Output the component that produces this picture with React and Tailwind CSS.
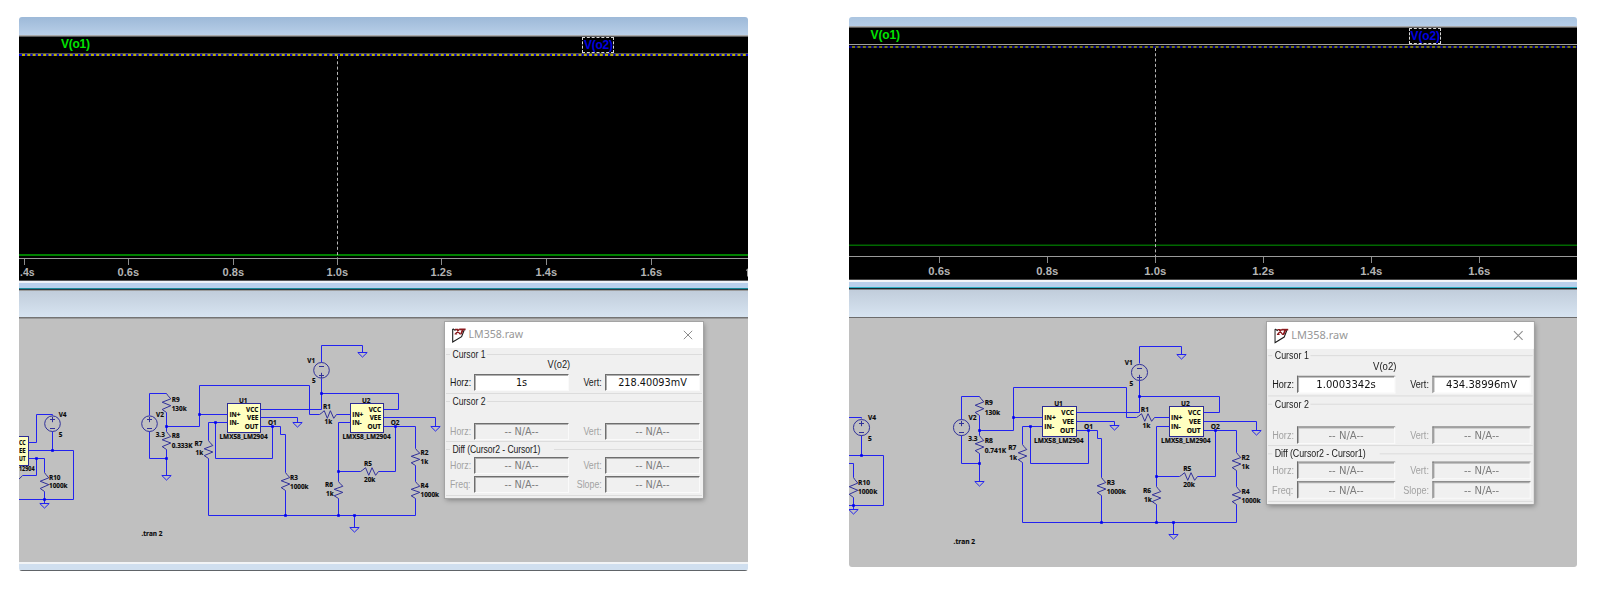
import React from 'react';

// Schematic is described once in sheet units; each view maps it with its own scale and offset.
const WIRES = [
  [[52.3, 415], [52.3, 414.3], [36.3, 414.3], [36.3, 442], [28.5, 442]],
  [[28.5, 450.7], [73.3, 450.7], [73.3, 499.7], [10, 499.7]],
  [[52.3, 431.7], [52.3, 450.7]],
  [[28.5, 458.7], [44.3, 458.7], [44.3, 472]],
  [[36.3, 458.7], [36.3, 475.5], [22.5, 475.5]],
  [[44.3, 491], [44.3, 503]],
  [[149.7, 415.7], [149.7, 393.3], [166.7, 393.3]],
  [[166.7, 412], [166.7, 431]],
  [[149.7, 431.7], [149.7, 458.7], [166.7, 458.7]],
  [[166.7, 449], [166.7, 475.5]],
  [[166.7, 426.3], [199.3, 426.3], [199.3, 385.3], [309.3, 385.3], [309.3, 414.3], [319, 414.3]],
  [[199.3, 414.3], [227.7, 414.3]],
  [[227.7, 422.3], [208, 422.3], [208, 440]],
  [[208, 458], [208, 515.7], [415.7, 515.7], [415.7, 498]],
  [[215.7, 422.3], [215.7, 458.7], [272.7, 458.7], [272.7, 426.3]],
  [[260.7, 409.3], [321.3, 409.3]],
  [[260.7, 417.5], [297.3, 417.5], [297.3, 422]],
  [[260.7, 426.3], [280.7, 426.3], [280.7, 434.3], [285, 434.3], [285, 472]],
  [[285, 490], [285, 515.7]],
  [[321.3, 362], [321.3, 345], [362.8, 345], [362.8, 352.5]],
  [[321.3, 378], [321.3, 409.3]],
  [[321.3, 393.3], [398.8, 393.3], [398.8, 409.3], [383.5, 409.3]],
  [[336, 414.3], [350.3, 414.3]],
  [[383.5, 417.5], [435.3, 417.5], [435.3, 426.5]],
  [[383.5, 426.3], [415.7, 426.3], [415.7, 448]],
  [[395.3, 426.3], [395.3, 471], [378, 471]],
  [[360, 471], [338.3, 471]],
  [[350.3, 422.3], [338.3, 422.3], [338.3, 481]],
  [[338.3, 498], [338.3, 515.7]],
  [[415.7, 465], [415.7, 481]],
  [[354.3, 515.7], [354.3, 527]],
];
const DOTS = [
  [52.3, 450.7], [36.3, 458.7], [44.3, 499.7], [166.7, 426.3], [166.7, 458.7], [199.3, 414.3],
  [215.7, 422.3], [272.7, 426.3], [285, 515.7], [321.3, 393.3], [395.3, 426.3], [338.3, 471],
  [338.3, 515.7], [354.3, 515.7],
];
const GROUNDS = [[44.3, 503], [166.7, 475.5], [297.3, 422], [362.8, 352.5], [435.3, 426.5], [354.3, 527]];
const V_RES = [
  [44.3, 472, 491], [166.7, 393.3, 412], [166.7, 431, 449], [208, 440, 458], [285, 472, 490],
  [338.3, 481, 498], [415.7, 448, 465], [415.7, 481, 498],
];
const H_RES = [[319, 336, 414.3], [360, 378, 471]];
const SOURCES = [[52.3, 423.7, false], [149.7, 423.7, false], [321.3, 370.3, true]];
const CHIPS = [[-4, 28.5, 436], [227.7, 260.5, 403.3], [350.3, 383.3, 403.3]];
const labels = (r8) => [
  ['V4', 58.7, 416.7], ['5', 58.7, 436.7], ['R10', 49, 479.7], ['1000k', 49, 488.2],
  ['R9', 171.7, 401.7], ['130k', 171.7, 411.3], ['V2', 156, 416.7], ['3.3', 155.7, 436.8],
  ['R8', 171.7, 438.3], [r8, 171.7, 448], ['R7', 194.5, 445.7], ['1k', 195.5, 455],
  ['.tran 2', 141.5, 536.3], ['V1', 307.3, 363.2], ['5', 312, 383.3],
  ['U1', 239, 402.5], ['U2', 362, 402.5], ['R1', 323, 409], ['1k', 324.5, 423.7],
  ['IN+', 229.5, 416.7], ['IN-', 229.5, 424.8], ['IN+', 352.3, 416.7], ['IN-', 352.3, 424.8],
  ['O1', 268, 425.2], ['O2', 390.7, 425.2],
  ['LMX58_LM2904', 219.5, 438.6], ['LMX58_LM2904', 342.5, 438.6],
  ['R3', 290, 479.7], ['1000k', 290, 488.5], ['R5', 364, 465.7], ['20k', 364, 481.6],
  ['R6', 325, 486.8], ['1k', 326, 496.3], ['R2', 420.5, 455.2], ['1k', 420.5, 464],
  ['R4', 420.5, 487.6], ['1000k', 420.5, 497.2],
];

function Schematic({ k, dx, dy, left, top, height, r8, edgeChip }) {
  const fx = (x) => x * k + dx;
  const fy = (y) => y * k + dy;
  const sx = (x) => Math.floor(fx(x)) + 0.5;
  const sy = (y) => Math.floor(fy(y)) + 0.5;
  const line = (pts) => pts.map(([x, y]) => `${sx(x)},${sy(y)}`).join(' ');
  const zig = [[0, 0], [0.1, 0.3], [0.28, 1], [0.46, -1], [0.64, 1], [0.84, -1], [1, 0]];
  return (
    <svg
      className="block w-full flex-none"
      style={{ height }}
      viewBox={`${left} ${top} 729 ${height}`}
      preserveAspectRatio="xMinYMin slice"
      fill="none"
    >
      {CHIPS.map(([a, b, y]) => (
        <rect key={a} x={sx(a)} y={sy(y)} width={sx(b) - sx(a)} height={Math.round(28.7 * k)} fill="#ffffc0" stroke="#2b2b96" />
      ))}
      <g stroke="#2222f0">
        {WIRES.map((w, i) => <polyline key={i} points={line(w)} />)}
        <path d={`M${fx(22.5)} ${fy(475.7)}L${fx(18)} ${fy(480)}`} stroke="#30309a" />
        {GROUNDS.map(([x, y], i) => (
          <path key={i} d={`M${sx(x) - 4.7} ${sy(y)}h9.4l-4.7 4.6z`} />
        ))}
      </g>
      {DOTS.map(([x, y], i) => <rect key={i} x={sx(x) - 1.3} y={sy(y) - 1.3} width="2.6" height="2.6" fill="#0000f0" />)}
      <g stroke="#30309a">
        {V_RES.map(([x, a, b], i) => (
          <polyline key={i} points={zig.map(([t, u]) => `${sx(x) + u * 4.3},${sy(a) + t * (sy(b) - sy(a))}`).join(' ')} />
        ))}
        {H_RES.map(([a, b, y], i) => (
          <polyline key={i} points={zig.map(([t, u]) => `${sx(a) + t * (sx(b) - sx(a))},${sy(y) - u * 3.8}`).join(' ')} />
        ))}
        {SOURCES.map(([x, y, flip], i) => {
          const p = flip ? 5.3 : -4.3;
          const m = flip ? -4 : 5;
          return (
            <g key={i}>
              <circle cx={sx(x)} cy={fy(y)} r={7.8 * k} />
              <path d={`M${sx(x) - 2.5} ${sy(y + p)}h5M${sx(x)} ${sy(y + p) - 2.7}v5.4M${sx(x) - 2.5} ${sy(y + m)}h5`} />
            </g>
          );
        })}
      </g>
      <g fill="#0a0a0a" stroke="#0a0a0a" strokeWidth="0.15" fontFamily="'Open Sans', 'Noto Sans', sans-serif" fontWeight="700" fontSize={6.4 * k}>
        {labels(r8).map(([t, x, y], i) => <text key={i} x={fx(x)} y={fy(y)}>{t}</text>)}
        {[258.3, 381].map((x) => (
          <g key={x} textAnchor="end">
            <text x={fx(x)} y={fy(412)}>VCC</text>
            <text x={fx(x)} y={fy(420.2)}>VEE</text>
            <text x={fx(x)} y={fy(429)}>OUT</text>
          </g>
        ))}
        {edgeChip && (
          <g>
            <text x="19" y="444.7" textLength="6.7" lengthAdjust="spacingAndGlyphs">CC</text>
            <text x="19" y="453.2" textLength="6.7" lengthAdjust="spacingAndGlyphs">EE</text>
            <text x="19" y="461.2" textLength="6.7" lengthAdjust="spacingAndGlyphs">UT</text>
            <text x="19" y="470.8" textLength="15.5" lengthAdjust="spacingAndGlyphs">12904</text>
          </g>
        )}
      </g>
    </svg>
  );
}

function Plot({ height, line, lineColor, cursorY, cursorColors, dash, cursorX, trace, traceH, traceColor, axis, ticks, base, tickW }) {
  return (
    <svg className="block w-full flex-none bg-black" style={{ height }}>
      <rect x="0" y={line} width="729" height="1" fill={lineColor} />
      <rect x="0" y={cursorY} width="729" height="2" fill={cursorColors[0]} />
      <line x1="3" x2="729" y1={cursorY + 1} y2={cursorY + 1} stroke={cursorColors[1]} strokeWidth="2" strokeDasharray={dash} />
      <rect x="0" y={trace} width="729" height={traceH} fill={traceColor} />
      <line x1={cursorX + 0.5} x2={cursorX + 0.5} y1={cursorY + 2} y2={axis} stroke="#b8b8b8" strokeDasharray="3 2.3" />
      <rect x="0" y={axis} width="729" height="1" fill="#9a9a9a" />
      {ticks.map(([x, t, textX, w]) => (
        <g key={t} fill="#b4b4b4">
          <rect x={x} y={axis + 1} width="1" height="6" fill="#8c8c8c" />
          <text
            x={textX ?? x - tickW / 2 + 0.3}
            y={base}
            fontFamily="'Liberation Sans', Arial, sans-serif"
            fontWeight="700"
            fontSize="11.3"
            textLength={w ?? tickW}
            lengthAdjust="spacingAndGlyphs"
          >
            {t}
          </text>
        </g>
      ))}
    </svg>
  );
}

function Label({ children, dim, className }) {
  return (
    <span className={`${dim ? 'text-[#a2a2a2]' : 'text-[#1a1a1a]'} text-[10.5px] leading-[13px] whitespace-nowrap inline-block ${className}`}>
      {children}
    </span>
  );
}

function Field({ value, dim }) {
  return (
    <div
      className={`h-[17px] w-[95px] flex-none border-t border-l border-r border-b border-t-[#6e6e6e] border-l-[#6e6e6e] border-r-[#fafafa] border-b-[#fafafa] text-center leading-[16px] font-['DejaVu_Sans_Condensed','DejaVu_Sans',sans-serif] shadow-[inset_1px_1px_0_#b0b0b0] ${
        dim ? 'bg-[#f0f0f0] text-[#7c7c7c] text-[10.8px]' : 'bg-white text-[#101010] text-[10.8px]'
      }`}
    >
      {value}
    </div>
  );
}

function Row({ a, av, b, bv, dim, className }) {
  return (
    <div className={`flex h-[17px] items-center ${className}`}>
      <div className="flex w-[28px] justify-end pr-[3px]"><Label dim={dim} className="origin-right scale-x-[0.84]">{a}</Label></div>
      <Field value={av} dim={dim} />
      <div className="flex w-[36px] justify-end pr-[3px]"><Label dim={dim} className="origin-right scale-x-[0.84]">{b}</Label></div>
      <Field value={bv} dim={dim} />
    </div>
  );
}

function Group({ title, children, className }) {
  return (
    <div className={`mx-px flex flex-col ${className}`}>
      <div className="flex h-[13px] items-center">
        <div className="h-px w-[4px] bg-[#dcdcdc]" />
        <Label className="origin-left scale-x-[0.82] pl-[3px] -mr-[6px]">{title}</Label>
        <div className="h-px flex-1 bg-[#dcdcdc]" />
      </div>
      {children}
    </div>
  );
}

function Dialog({ horz, vert, className }) {
  return (
    <div className={`absolute h-[176px] w-[257.5px] bg-[#f0f0f0] font-['Liberation_Sans',Arial,sans-serif] shadow-[0_0_0_1px_#a4a4a4,1px_2px_5px_0px_rgba(0,0,0,0.35)] ${className}`}>
      <div className="flex h-[26px] items-center bg-white pl-[7px] pr-[10px]">
        <svg width="14" height="15" viewBox="0 0 14 15" fill="none">
          <path d="M0.7 1V14L9.6 8.6L12.2 2" stroke="#1c1c1c" strokeWidth="1.1" />
          <path d="M0.7 0.8L3.5 2.5" stroke="#1c1c1c" strokeWidth="1.1" />
          <path d="M3 1.3H6.2M2.6 6H5.2M7.6 6H9.4M3.4 5.8L7.4 1.2M4.6 1.4L7.8 5.8" stroke="#8a1a1e" strokeWidth="1.2" />
          <path d="M7.2 1.4H13.6M10.8 1.6L9 6" stroke="#8a1a1e" strokeWidth="1.7" />
        </svg>
        <span className="ml-[2.5px] flex-1 font-['Noto_Sans',sans-serif] text-[10.6px] text-[#979797]">LM358.raw</span>
        <svg width="10" height="10" viewBox="0 0 10 10" stroke="#8c8c8c"><path d="M0.8 0.8L9.2 9.2M9.2 0.8L0.8 9.2" /></svg>
      </div>
      <Group title="Cursor 1" className="h-[46px] border-b border-[#dcdcdc]">
        <div className="flex h-[13px] items-center justify-center pl-0 pr-[29px] -mt-[3px]">
          <Label className="scale-x-[0.88]">V(o2)</Label>
        </div>
        <Row a="Horz:" av={horz} b="Vert:" bv={vert} className="mt-[3px]" />
      </Group>
      <Group title="Cursor 2" className="mt-px h-[47px] border-b border-[#dcdcdc]">
        <Row a="Horz:" av="-- N/A--" b="Vert:" bv="-- N/A--" dim className="mt-[15px]" />
      </Group>
      <Group title={<span className="tracking-[-0.1px]">Diff (Cursor2 - Cursor1)</span>} className="mt-px h-[53px] border-b border-[#dcdcdc]">
        <Row a="Horz:" av="-- N/A--" b="Vert:" bv="-- N/A--" dim className="mt-px" />
        <Row a="Freq:" av="-- N/A--" b="Slope:" bv="-- N/A--" dim className="mt-[2px]" />
      </Group>
    </div>
  );
}

const legendText = "text-[12px] font-bold leading-[14px] font-['Liberation_Sans',Arial,sans-serif]";

export default function App() {
  return (
    <div className="flex h-[596px] w-[1602px] items-start overflow-hidden bg-white pl-[19px] pt-[17px]">
      <section className="relative flex h-[554px] w-[729px] flex-none flex-col overflow-hidden rounded-[3px]">
        <div className="h-[18px] flex-none bg-linear-to-b from-[#9db9d8] to-[#b9cfe8]" />
        <div className="h-[2px] flex-none border-b border-[#5c5c5c] bg-[#a8a8a8]" />
        <div className="flex h-[16px] flex-none items-start bg-black">
          <span className={`ml-[42px] w-[30px] tracking-[-0.25px] text-[#00e400] ${legendText}`}>V(o1)</span>
          <span className={`ml-[491px] h-[16px] w-[32px] border border-dashed border-[#d8d8d8] pl-px tracking-[-0.25px] text-[#0000e0] ${legendText}`}>V(o2)</span>
        </div>
        <Plot height={227} line={0} lineColor="#505050" cursorY={1} cursorColors={['#0000c8', '#b8b000']} dash="3 2.3" cursorX={318} trace={201} traceH={2} traceColor="#008000" axis={205} base={223} tickW={21.5}
          ticks={[[5, '.4s', 1, 14.5], [109, '0.6s'], [214, '0.8s'], [318, '1.0s'], [422, '1.2s'], [527, '1.4s'], [632, '1.6s']]} />
        <div className="h-px flex-none bg-[#555555]" />
        <div className="h-[2px] flex-none bg-[#eef2f7]" />
        <div className="h-[5px] flex-none bg-[#b9d0ec]" />
        <div className="h-px flex-none bg-[#1c8c9c]" />
        <div className="h-px flex-none bg-[#2c3c44]" />
        <div className="h-px flex-none bg-[#9c9c9c]" />
        <div className="h-[26px] flex-none bg-linear-to-b from-[#c1cddb] to-[#d7e4f1]" />
        <div className="h-[2px] flex-none border-b border-[#9a9a9a] bg-[#747474]" />
        <div className="h-[243px] flex-none bg-[#c0c0c0]">
          <Schematic k={1} dx={0} dy={0} left={19} top={319} height={243} r8="0.333K" edgeChip />
        </div>
        <div className="h-[2px] flex-none bg-[#f2f4f6]" />
        <div className="h-[6px] flex-none bg-[#d0dfef]" />
        <div className="h-px flex-none bg-[#606468]" />
        <svg className="absolute left-[727px] top-[251px]" width="2" height="9"><path d="M0 2L2 0.3V8.5H1V2.5L0 3z" fill="#a0a0a0" /></svg>
        <Dialog horz="1s" vert="218.40093mV" className="left-[426px] top-[305px]" />
      </section>

      <section className="relative ml-[101px] flex h-[550px] w-[728px] flex-none flex-col overflow-hidden rounded-[3px]">
        <div className="h-[9px] flex-none bg-linear-to-b from-[#abc5e0] to-[#b5cde8]" />
        <div className="h-[2px] flex-none border-b border-[#5c5c5c] bg-[#a8a8a8]" />
        <div className="flex h-[16px] flex-none items-start bg-black">
          <span className={`ml-[21.5px] w-[31px] text-[#00e400] tracking-[-0.1px] ${legendText}`}>V(o1)</span>
          <span className={`ml-[507px] h-[16px] w-[32.5px] border border-dashed border-[#d8d8d8] pl-px tracking-[-0.1px] text-[#0000e0] ${legendText}`}>V(o2)</span>
        </div>
        <Plot height={235} line={0} lineColor="#a0a0a0" cursorY={2} cursorColors={['#00008c', '#787810']} dash="3 2.42" cursorX={306} trace={200.5} traceH={1.5} traceColor="#006800" axis={212} base={231} tickW={22}
          ticks={[[90, '0.6s'], [198, '0.8s'], [306, '1.0s'], [414, '1.2s'], [522, '1.4s'], [630, '1.6s']]} />
        <div className="h-px flex-none bg-[#444444]" />
        <div className="h-[2px] flex-none bg-[#f4f6f8]" />
        <div className="h-[5px] flex-none bg-[#b9d0ec]" />
        <div className="h-px flex-none bg-[#2cb0c4]" />
        <div className="h-px flex-none bg-[#18282e]" />
        <div className="h-px flex-none bg-[#808488]" />
        <div className="h-[27px] flex-none bg-linear-to-b from-[#c1cddb] to-[#d7e4f1]" />
        <div className="h-px flex-none bg-[#6c6c6c]" />
        <div className="h-[249px] flex-none bg-[#c0c0c0]">
          <Schematic k={1.032} dx={807.5} dy={-9.7} left={849} top={318} height={249} r8="0.741K" />
        </div>
        <Dialog horz="1.0003342s" vert="434.38996mV" className="left-[417.5px] top-[305px] origin-top-left scale-[1.034]" />
      </section>
    </div>
  );
}
